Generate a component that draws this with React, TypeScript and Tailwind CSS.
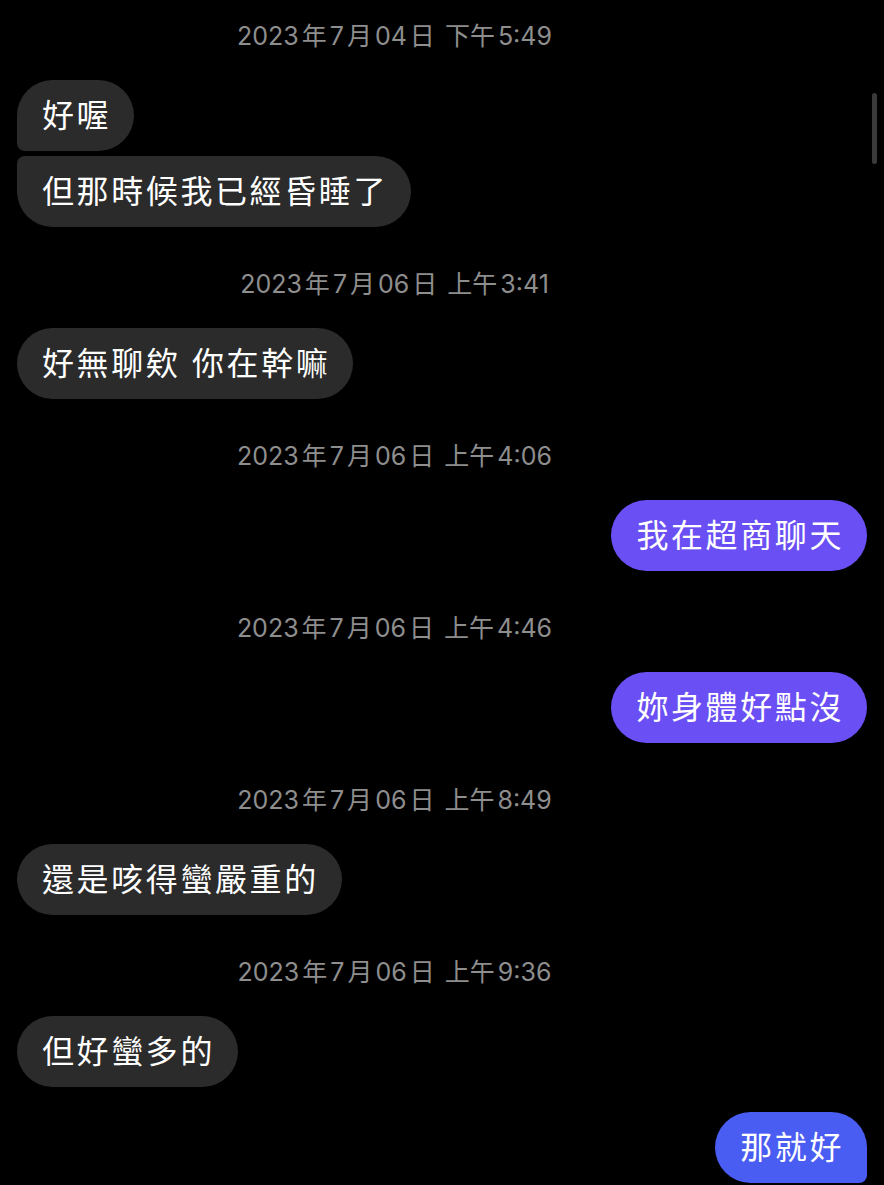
import React from "react";

type Msg =
  | { kind: "time"; parts: string[]; time: string[] }
  | { kind: "in"; text: string; shape?: "first" | "last" }
  | { kind: "out"; text: string; color: "purple" | "blue"; shape?: "last" };

const thread: Msg[] = [
  { kind: "time", parts: ["2023", "年", "7", "月", "04", "日"], time: ["下午", "5:49"] },
  { kind: "in", text: "好喔", shape: "first" },
  { kind: "in", text: "但那時候我已經昏睡了", shape: "last" },
  { kind: "time", parts: ["2023", "年", "7", "月", "06", "日"], time: ["上午", "3:41"] },
  { kind: "in", text: "好無聊欸 你在幹嘛" },
  { kind: "time", parts: ["2023", "年", "7", "月", "06", "日"], time: ["上午", "4:06"] },
  { kind: "out", text: "我在超商聊天", color: "purple" },
  { kind: "time", parts: ["2023", "年", "7", "月", "06", "日"], time: ["上午", "4:46"] },
  { kind: "out", text: "妳身體好點沒", color: "purple" },
  { kind: "time", parts: ["2023", "年", "7", "月", "06", "日"], time: ["上午", "8:49"] },
  { kind: "in", text: "還是咳得蠻嚴重的" },
  { kind: "time", parts: ["2023", "年", "7", "月", "06", "日"], time: ["上午", "9:36"] },
  { kind: "in", text: "但好蠻多的" },
  { kind: "out", text: "那就好", color: "blue", shape: "last" },
];

function Stamp({ parts, time }: { parts: string[]; time: string[] }) {
  return (
    <div className="flex h-[30px] w-[789px] items-center justify-center text-[25px] leading-[30px] text-[#8e8e8e]">
      <div className="flex gap-[3px]">
        {parts.map((p, i) => (
          <span key={i}>{p}</span>
        ))}
      </div>
      <div className="ml-[10px] flex gap-[3px]">
        {time.map((p, i) => (
          <span key={i}>{p}</span>
        ))}
      </div>
    </div>
  );
}

function Bubble({ msg }: { msg: Msg }) {
  if (msg.kind === "time") return null;
  const base =
    "flex h-[71px] items-center pl-[25px] pr-[23px] text-[32px] tracking-[2.6px] text-white";
  if (msg.kind === "in") {
    const corners =
      msg.shape === "first"
        ? "rounded-[36px] rounded-bl-[8px]"
        : msg.shape === "last"
          ? "rounded-[36px] rounded-tl-[8px]"
          : "rounded-[36px]";
    return (
      <div className="flex justify-start">
        <div className={`${base} ${corners} bg-[#2b2b2b]`}>{msg.text}</div>
      </div>
    );
  }
  const bg = msg.color === "purple" ? "bg-[#6a4ff4]" : "bg-[#4a5df2]";
  const corners = msg.shape === "last" ? "rounded-[36px] rounded-br-[8px]" : "rounded-[36px]";
  return (
    <div className="flex justify-end">
      <div className={`${base} ${corners} ${bg}`}>{msg.text}</div>
    </div>
  );
}

export default function App() {
  return (
    <div
      className="relative h-[1185px] w-[884px] overflow-hidden bg-black"
      style={{ fontFamily: '"Inter", "Noto Sans CJK TC", sans-serif' }}
    >
      <div className="flex flex-col pl-[17px] pr-[17px] pt-[21px]">
        {thread.map((m, i) => {
          const prev = thread[i - 1];
          let mt = "";
          if (i > 0) {
            if (m.kind === "time") mt = "mt-[42px]";
            else if (prev && prev.kind === "time") mt = "mt-[29px]";
            else if (prev && prev.kind === m.kind) mt = "mt-[5px]";
            else mt = "mt-[25px]";
          }
          return (
            <div key={i} className={mt}>
              {m.kind === "time" ? (
                <div className="-ml-[17px]">
                  <Stamp parts={m.parts} time={m.time} />
                </div>
              ) : (
                <Bubble msg={m} />
              )}
            </div>
          );
        })}
      </div>
      {/* scroll indicator */}
      <div className="absolute left-[872px] top-[93px] h-[71px] w-[5px] rounded-full bg-[#3a3a3a]" />
    </div>
  );
}
